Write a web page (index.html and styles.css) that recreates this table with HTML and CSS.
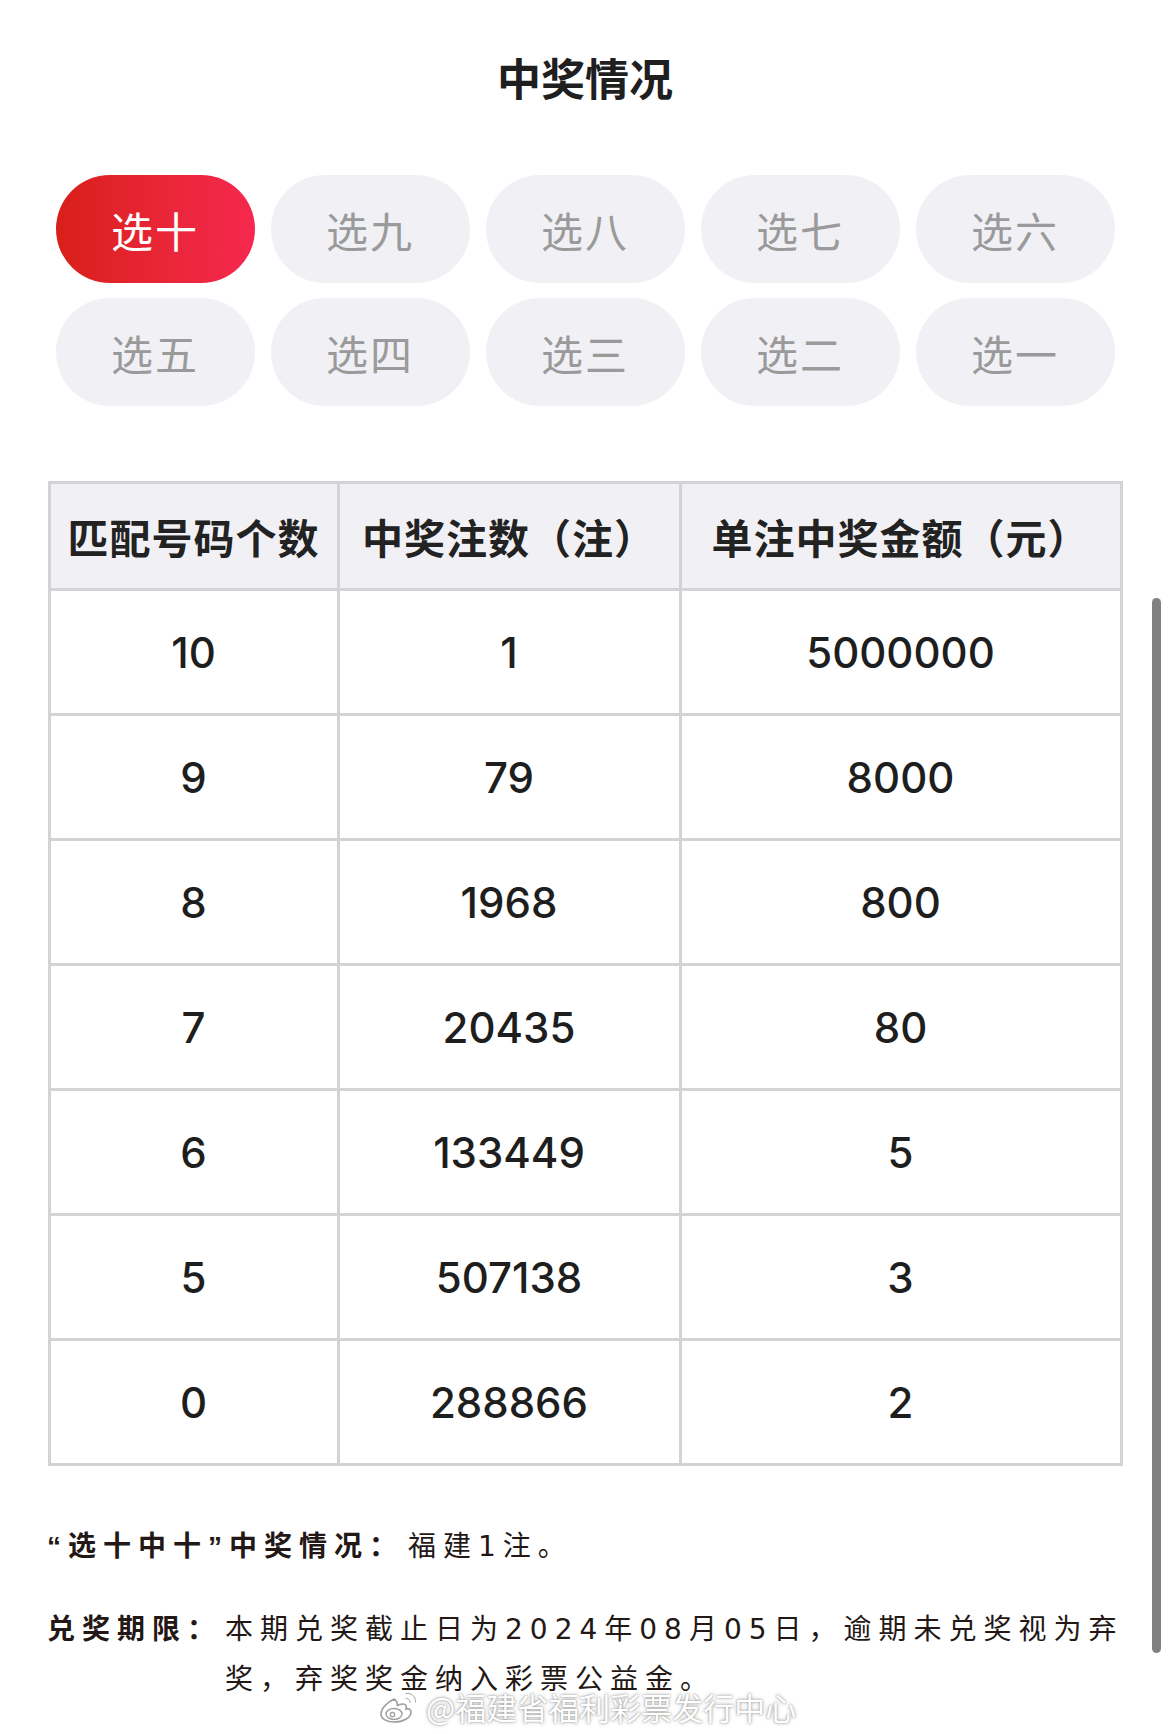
FILE: index.html
```html
<!DOCTYPE html>
<html lang="zh-CN">
<head>
<meta charset="utf-8">
<title>中奖情况</title>
<link rel="stylesheet" href="styles.css">
</head>
<body>
<main class="page">
  <h1 class="title">中奖情况</h1>

  <nav class="tabs">
    <button class="tab active">选十</button>
    <button class="tab">选九</button>
    <button class="tab">选八</button>
    <button class="tab">选七</button>
    <button class="tab">选六</button>
    <button class="tab">选五</button>
    <button class="tab">选四</button>
    <button class="tab">选三</button>
    <button class="tab">选二</button>
    <button class="tab">选一</button>
  </nav>

  <table class="prize">
    <colgroup>
      <col class="c1">
      <col class="c2">
      <col class="c3">
    </colgroup>
    <thead>
      <tr><th>匹配号码个数</th><th>中奖注数（注）</th><th>单注中奖金额（元）</th></tr>
    </thead>
    <tbody>
      <tr><td>10</td><td>1</td><td>5000000</td></tr>
      <tr><td>9</td><td>79</td><td>8000</td></tr>
      <tr><td>8</td><td>1968</td><td>800</td></tr>
      <tr><td>7</td><td>20435</td><td>80</td></tr>
      <tr><td>6</td><td>133449</td><td>5</td></tr>
      <tr><td>5</td><td>507138</td><td>3</td></tr>
      <tr><td>0</td><td>288866</td><td>2</td></tr>
    </tbody>
  </table>

  <section class="notes">
    <div class="note-row first">
      <span class="note-label">“选十中十”中奖情况：</span>
      <span class="note-text">福建1注。</span>
    </div>
    <div class="note-row second">
      <span class="note-label">兑奖期限：</span>
      <p class="note-text">本期兑奖截止日为2024年08月05日，逾期未兑奖视为弃奖，弃奖奖金纳入彩票公益金。</p>
    </div>
  </section>

  <div class="watermark">
    <svg class="wb-logo" width="44" height="34" viewBox="0 0 44 34" aria-hidden="true">
      <path d="M16 9c-6 3-13 9-13 15 0 5 6 8 13 8 9 0 17-4 17-10 0-3-3-4-5-3 1-3 0-5-3-5-2 0-5 1-6 2 1-3 0-5-3-7z" fill="#fff" stroke="#9a9a9a" stroke-width="1.6"/>
      <ellipse cx="16" cy="24" rx="8" ry="5.5" fill="#fff" stroke="#9a9a9a" stroke-width="1.4"/>
      <circle cx="14.5" cy="24.5" r="2.2" fill="#fff" stroke="#9a9a9a" stroke-width="1.3"/>
      <path d="M28 3.5c5-1 10 3 9.5 8.5" fill="none" stroke="#fff" stroke-width="3.2" stroke-linecap="round"/>
      <path d="M28 3.5c5-1 10 3 9.5 8.5" fill="none" stroke="#9a9a9a" stroke-width="1" stroke-linecap="round"/>
      <path d="M28 8.5c2.5-.3 4.5 1.8 4 4" fill="none" stroke="#fff" stroke-width="3" stroke-linecap="round"/>
      <path d="M28 8.5c2.5-.3 4.5 1.8 4 4" fill="none" stroke="#9a9a9a" stroke-width="1" stroke-linecap="round"/>
    </svg>
    <span class="wb-text">@福建省福利彩票发行中心</span>
  </div>

  <div class="scrollbar"></div>
</main>
</body>
</html>
```

FILE: styles.css
```css
* {
  box-sizing: border-box;
}

html, body {
  margin: 0;
  padding: 0;
  background: #ffffff;
}

body {
  font-family: "Noto Sans CJK SC", "Noto Sans", sans-serif;
  color: #222222;
}

.page {
  position: relative;
  width: 1170px;
  min-height: 1734px;
  overflow: hidden;
}

.title {
  margin: 47px 0 0;
  text-align: center;
  font-size: 44px;
  line-height: 60px;
  font-weight: 700;
  color: #1f1f1f;
}

.tabs {
  display: grid;
  grid-template-columns: repeat(5, 199px);
  gap: 15px 16px;
  justify-content: center;
  margin-top: 68px;
}

.tab {
  height: 108px;
  border: none;
  border-radius: 54px;
  background: #f1f1f5;
  color: #9a9a9a;
  font-family: "Noto Sans CJK SC", sans-serif;
  font-size: 42px;
  font-weight: 400;
  letter-spacing: 2px;
  padding: 0;
  display: flex;
  align-items: center;
  justify-content: center;
}

.tab.active {
  background: linear-gradient(90deg, #d81f19 0%, #e92638 55%, #f6284f 100%);
  color: #ffffff;
}

.prize {
  margin: 75px auto 0;
  width: 1075px;
  table-layout: fixed;
  border-collapse: separate;
  border-spacing: 0;
  border-top: 3px solid #d3d3d5;
  border-left: 3px solid #d3d3d5;
}

.prize col.c1 { width: 289px; }
.prize col.c2 { width: 342px; }
.prize col.c3 { width: 441px; }

.prize th,
.prize td {
  border-right: 3px solid #d3d3d5;
  border-bottom: 3px solid #d3d3d5;
  text-align: center;
  vertical-align: middle;
  padding: 0;
}

.prize th {
  height: 107px;
  background: #f1f1f5;
  font-size: 41px;
  letter-spacing: 1px;
  font-weight: 700;
  color: #222222;
  white-space: nowrap;
}

.prize td {
  height: 125px;
  font-family: Inter, "Liberation Sans", sans-serif;
  font-size: 42px;
  font-weight: 500;
  color: #1e1e1e;
}

.notes {
  margin-top: 56px;
  padding: 0 36px 0 47px;
  font-size: 28px;
  line-height: 50px;
  letter-spacing: 7px;
  color: #231815;
}

.note-row {
  display: flex;
  align-items: flex-start;
}

.note-row.second {
  margin-top: 33px;
}

.note-label {
  flex-shrink: 0;
  font-family: "Liberation Sans", "Noto Sans CJK SC", sans-serif;
  font-weight: 700;
}

.note-row.first .note-text {
  margin-left: 4px;
}

.note-row.second .note-label {
  width: 178px;
}

.note-text {
  margin: 0;
  font-family: "DejaVu Sans", "Noto Sans CJK SC", sans-serif;
  font-weight: 400;
}

.watermark {
  position: absolute;
  left: 378px;
  top: 1689px;
  display: flex;
  align-items: center;
  gap: 4px;
  opacity: 0.95;
}

.wb-logo {
  display: block;
}

.wb-text {
  font-size: 31px;
  line-height: 36px;
  color: #ffffff;
  text-shadow: 0 0 2px rgba(0, 0, 0, 0.45), 0 0 4px rgba(0, 0, 0, 0.25);
}

.scrollbar {
  position: absolute;
  left: 1152px;
  top: 598px;
  width: 9px;
  height: 1055px;
  border-radius: 5px;
  background: #808080;
}
```
